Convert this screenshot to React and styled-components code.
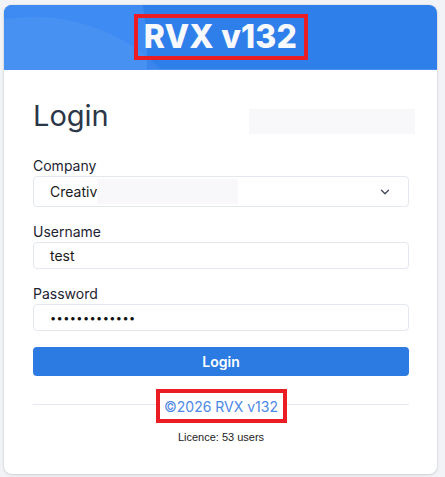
import React from "react";
import styled, { createGlobalStyle } from "styled-components";
import { ChevronDown } from "lucide-react";

const Global = createGlobalStyle`
  html, body { margin: 0; padding: 0; background: #f2f3f6; }
  body { font-family: "Inter", "Noto Sans", sans-serif; }
  * { box-sizing: border-box; }
`;

const Page = styled.div`
  padding: 5px 8px 5px 4px;
`;

const Card = styled.div`
  width: 433px;
  background: #fff;
  border-radius: 8px;
  overflow: hidden;
  box-shadow: 0 1px 3px rgba(0, 0, 0, 0.12), 0 0 0 1px #e9ebef;
`;

const Header = styled.div`
  position: relative;
  height: 65px;
  background: #2f7fea;
  display: flex;
  align-items: center;
  justify-content: center;
  overflow: hidden;
  border-bottom: 1px solid #4a8ff0;
  &::before {
    content: "";
    position: absolute;
    width: 600px;
    height: 600px;
    border-radius: 50%;
    left: -457px;
    top: -250px;
    background: #3e8cf3;
  }
  &::after {
    content: "";
    position: absolute;
    width: 360px;
    height: 360px;
    border-radius: 50%;
    left: -150px;
    top: 12px;
    background: rgba(255, 255, 255, 0.05);
  }
`;

const Mark = styled.div`
  position: relative;
  z-index: 1;
  width: 174px;
  height: 46px;
  border: 4px solid #ea1c24;
  display: flex;
  align-items: center;
  justify-content: center;
`;

const Title = styled.h1`
  margin: 0;
  color: #f7f9fd;
  font-family: "Inter", sans-serif;
  font-weight: 800;
  font-size: 32px;
  letter-spacing: 0.2px;
  line-height: 1;
`;

const Body = styled.div`
  padding: 28px 28px 0 29px;
`;

const HeadingRow = styled.div`
  display: flex;
  align-items: flex-start;
  justify-content: space-between;
  margin-bottom: 22px;
`;

const Heading = styled.h2`
  margin: 0;
  font-family: "Inter", sans-serif;
  font-weight: 400;
  font-size: 29px;
  line-height: 36px;
  color: #2b3648;
`;

const Blank = styled.div`
  width: ${(p) => p.$w}px;
  height: ${(p) => p.$h}px;
  background: #f8f8fa;
  margin-top: ${(p) => p.$top || 0}px;
  margin-right: ${(p) => p.$right || 0}px;
`;

const Field = styled.div`
  display: flex;
  flex-direction: column;
  margin-bottom: ${(p) => p.$gap}px;
`;

const Label = styled.label`
  font-size: 14px;
  line-height: 20px;
  color: #1d2330;
`;

const Box = styled.div`
  height: ${(p) => p.$h}px;
  border: 1px solid #e3e8ef;
  border-radius: 4px;
  display: flex;
  align-items: center;
  padding: 0 16px;
  font-size: 14px;
  color: #1a1a1a;
`;

const Value = styled.span`
  font-size: 14px;
  color: #1a1a1a;
`;

const Dots = styled.span`
  font-size: 11px;
  letter-spacing: 0.4px;
  color: #111;
`;

const Grow = styled.div`
  flex: 1;
  display: flex;
  align-items: center;
`;

const Button = styled.button`
  width: 100%;
  height: 29px;
  border: none;
  border-radius: 4px;
  background: #2c7be3;
  color: #fff;
  font-family: "Inter", sans-serif;
  font-weight: 600;
  font-size: 14px;
`;

const FooterRow = styled.div`
  display: flex;
  align-items: center;
  margin-top: 13px;
`;

const Line = styled.div`
  flex: 1;
  height: 1px;
  background: #e4e9f1;
  margin-top: -4px;
`;

const FooterMark = styled.div`
  width: 131px;
  height: 34px;
  border: 4px solid #ea1c24;
  display: flex;
  align-items: center;
  justify-content: center;
  color: #4d88e6;
  font-size: 14px;
`;

const Licence = styled.div`
  text-align: center;
  font-family: "Liberation Sans", Arial, sans-serif;
  font-size: 11px;
  color: #222;
  margin-top: 8px;
  padding-bottom: 31px;
`;

export default function App() {
  return (
    <>
      <Global />
      <Page>
        <Card>
          <Header>
            <Mark>
              <Title>RVX v132</Title>
            </Mark>
          </Header>
          <Body>
            <HeadingRow>
              <Heading>Login</Heading>
              <Blank $w={166} $h={25} $top={11} $right={-6} />
            </HeadingRow>
            <Field $gap={15}>
              <Label>Company</Label>
              <Box $h={31}>
                <Grow>
                  <Value>Creativ</Value>
                  <Blank $w={141} $h={25} />
                </Grow>
                <ChevronDown size={14} strokeWidth={2.5} color="#4a5160" />
              </Box>
            </Field>
            <Field $gap={15}>
              <Label>Username</Label>
              <Box $h={27}>
                <Value>test</Value>
              </Box>
            </Field>
            <Field $gap={16}>
              <Label>Password</Label>
              <Box $h={27}>
                <Dots>•••••••••••••</Dots>
              </Box>
            </Field>
            <Button>Login</Button>
            <FooterRow>
              <Line />
              <FooterMark>©2026 RVX v132</FooterMark>
              <Line />
            </FooterRow>
            <Licence>Licence: 53 users</Licence>
          </Body>
        </Card>
      </Page>
    </>
  );
}
